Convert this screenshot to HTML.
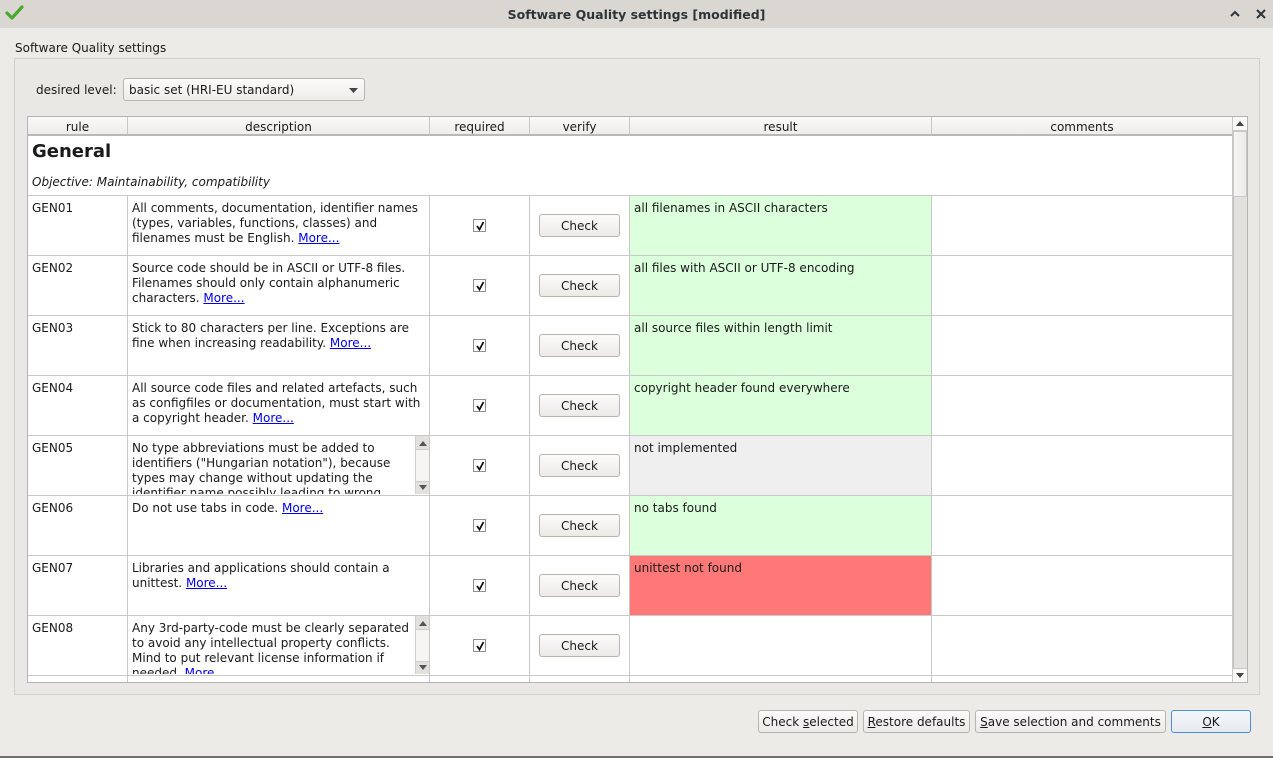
<!DOCTYPE html>
<html><head><meta charset="utf-8"><style>
*{margin:0;padding:0;box-sizing:border-box}
body{width:1273px;height:758px;background:#edebe7;font-family:"DejaVu Sans","Liberation Sans",sans-serif;font-size:12px;color:#1a1a1a;position:relative;overflow:hidden}
.a{position:absolute}
.tb{left:0;top:0;width:1273px;height:28px;background:#dad7d3}
.vl{position:absolute;width:1px;background:#c8c8c8}
.hl{position:absolute;height:1px;background:#c8c8c8}
.t{position:absolute;line-height:15px;white-space:nowrap}
a{color:#0000ee;text-decoration:underline}
.btn{position:absolute;height:23px;border:1px solid #b8b5b0;border-radius:3px;background:linear-gradient(#fbfbfa,#eceae7);text-align:center;line-height:22px}
.cb{position:absolute;width:13px;height:13px;border:1px solid #8e8e8e;background:#fff}
.hd{position:absolute;top:117px;height:18px;line-height:20px;text-align:center;background:linear-gradient(#faf9f8,#efedea);border-right:1px solid #c8c8c8;border-bottom:1px solid #b8b8b8}
</style></head><body>
<div class="a tb"></div>
<svg class="a" style="left:5px;top:5px" width="20" height="16" viewBox="0 0 20 16"><path d="M2 8 L7 13 L17 2" stroke="#4aa82e" stroke-width="3.2" fill="none" stroke-linecap="round" stroke-linejoin="round"/></svg>
<div class="a" style="left:0;top:7px;width:1273px;text-align:center;font-weight:bold;font-size:12.5px;color:#2e3436">Software Quality settings [modified]</div>
<svg class="a" style="left:1229px;top:9px" width="12" height="10"><path d="M2 7 L6 3 L10 7" stroke="#2e3436" stroke-width="2" fill="none"/></svg>
<svg class="a" style="left:1255px;top:8px" width="12" height="12"><path d="M2 2 L10 10 M10 2 L2 10" stroke="#2e3436" stroke-width="2"/></svg>
<div class="t" style="left:15px;top:41px">Software Quality settings</div>
<div class="a" style="left:14px;top:58px;width:1246px;height:637px;border:1px solid #d3d0cb;background:#eae8e4"></div>
<div class="t" style="left:36px;top:83px">desired level:</div>
<div class="a" style="left:123px;top:78px;width:242px;height:23px;border:1px solid #b8b5b0;border-radius:3px;background:linear-gradient(#fbfbfa,#efedea);padding-left:5px;line-height:23px">basic set (HRI-EU standard)<svg class="a" style="right:6px;top:9px" width="9" height="5"><path d="M0 0 L9 0 L4.5 5Z" fill="#444"/></svg></div>
<div class="a" style="left:27px;top:116px;width:1221px;height:567px;border:1px solid #b4b4b4;background:#fff"></div>
<div class="hd" style="left:28px;width:100px">rule</div>
<div class="hd" style="left:128px;width:302px">description</div>
<div class="hd" style="left:430px;width:100px">required</div>
<div class="hd" style="left:530px;width:100px">verify</div>
<div class="hd" style="left:630px;width:302px">result</div>
<div class="hd" style="left:932px;width:301px">comments</div>
<div class="a" style="left:1233px;top:117px;width:14px;height:565px;background:#e3e1de;border-left:1px solid #c0c0c0"></div>
<div class="a" style="left:1233px;top:131px;width:14px;height:66px;background:linear-gradient(90deg,#f6f5f4,#ecebe9);border:1px solid #c8c8c8"></div>
<div class="a" style="left:1233px;top:117px;width:14px;height:14px;background:#f8f8f7;border-bottom:1px solid #c8c8c8"></div>
<svg class="a" style="left:1236px;top:121px" width="8" height="5"><path d="M0 5 L8 5 L4 0Z" fill="#444"/></svg>
<div class="a" style="left:1233px;top:668px;width:14px;height:14px;background:#f8f8f7;border-top:1px solid #c8c8c8"></div>
<svg class="a" style="left:1236px;top:673px" width="8" height="5"><path d="M0 0 L8 0 L4 5Z" fill="#444"/></svg>
<div class="t" style="left:32px;top:141px;font-size:18px;font-weight:bold;line-height:22px">General</div>
<div class="t" style="left:32px;top:175px;font-style:italic">Objective: Maintainability, compatibility</div>
<div class="hl" style="left:28px;top:135px;width:1205px;background:#b8b8b8"></div>
<div id="rows"></div>
<div class="vl" style="left:127px;top:195px;height:487px"></div>
<div class="vl" style="left:429px;top:195px;height:487px"></div>
<div class="vl" style="left:529px;top:195px;height:487px"></div>
<div class="vl" style="left:629px;top:195px;height:487px"></div>
<div class="vl" style="left:931px;top:195px;height:487px"></div>
<div class="vl" style="left:1232px;top:135px;height:547px"></div>
<div class="btn" style="left:758px;top:710px;width:100px">Check <u>s</u>elected</div>
<div class="btn" style="left:863px;top:710px;width:107px"><u>R</u>estore defaults</div>
<div class="btn" style="left:975px;top:710px;width:191px"><u>S</u>ave selection and comments</div>
<div class="btn" style="left:1171px;top:710px;width:80px;border-color:#4a90d9;background:linear-gradient(#f4f7fa,#e6ebf0)"><u>O</u>K</div>
<div class="a" style="left:0;top:756px;width:1273px;height:2px;background:#6e6e6e"></div>
<script>
var R=[
["GEN01","All comments, documentation, identifier names<br>(types, variables, functions, classes) and<br>filenames must be English. <a>More...</a>","all filenames in ASCII characters","#dcffdc",0],
["GEN02","Source code should be in ASCII or UTF-8 files.<br>Filenames should only contain alphanumeric<br>characters. <a>More...</a>","all files with ASCII or UTF-8 encoding","#dcffdc",0],
["GEN03","Stick to 80 characters per line. Exceptions are<br>fine when increasing readability. <a>More...</a>","all source files within length limit","#dcffdc",0],
["GEN04","All source code files and related artefacts, such<br>as configfiles or documentation, must start with<br>a copyright header. <a>More...</a>","copyright header found everywhere","#dcffdc",0],
["GEN05","No type abbreviations must be added to<br>identifiers (\"Hungarian notation\"), because<br>types may change without updating the<br>identifier name possibly leading to wrong","not implemented","#efefef",1],
["GEN06","Do not use tabs in code. <a>More...</a>","no tabs found","#dcffdc",0],
["GEN07","Libraries and applications should contain a<br>unittest. <a>More...</a>","unittest not found","#ff7878",0],
["GEN08","Any 3rd-party-code must be clearly separated<br>to avoid any intellectual property conflicts.<br>Mind to put relevant license information if<br>needed. <a>More...</a>","","#fff",1]];
var h="";
R.forEach(function(r,i){var y=195+i*60;
h+='<div class="hl" style="left:28px;top:'+y+'px;width:1205px"></div>';
h+='<div class="a" style="left:630px;top:'+(y+1)+'px;width:301px;height:59px;background:'+r[3]+'"></div>';
h+='<div class="t" style="left:32px;top:'+(y+6)+'px">'+r[0]+'</div>';
h+='<div class="a" style="left:132px;top:'+(y+1)+'px;width:'+(r[4]?282:296)+'px;height:'+(r[4]?58:59)+'px;overflow:hidden;line-height:15px;white-space:nowrap;padding-top:5px">'+r[1]+'</div>';
if(r[4]){h+='<div class="a" style="left:415px;top:'+(y+1)+'px;width:14px;height:58px;background:#e3e1de;border-left:1px solid #d0d0d0"><div class="a" style="left:0;top:13px;width:13px;height:33px;background:#f6f5f4;border-top:1px solid #ccc;border-bottom:1px solid #ccc"></div><svg class="a" style="left:3px;top:5px" width="8" height="5"><path d="M0 5 L8 5 L4 0Z" fill="#555"/></svg><svg class="a" style="left:3px;top:49px" width="8" height="5"><path d="M0 0 L8 0 L4 5Z" fill="#555"/></svg></div>';}
h+='<div class="cb" style="left:473px;top:'+(y+24)+'px"><svg class="a" style="left:1px;top:1px" width="10" height="10"><path d="M2 5 L4.5 8.5 L8.5 1" stroke="#111" stroke-width="1.8" fill="none"/></svg></div>';
h+='<div class="btn" style="left:539px;top:'+(y+19)+'px;width:81px">Check</div>';
h+='<div class="t" style="left:634px;top:'+(y+6)+'px">'+r[2]+'</div>';
});
h+='<div class="hl" style="left:28px;top:675px;width:1205px"></div>';
document.getElementById("rows").innerHTML=h;
</script>
</body></html>
